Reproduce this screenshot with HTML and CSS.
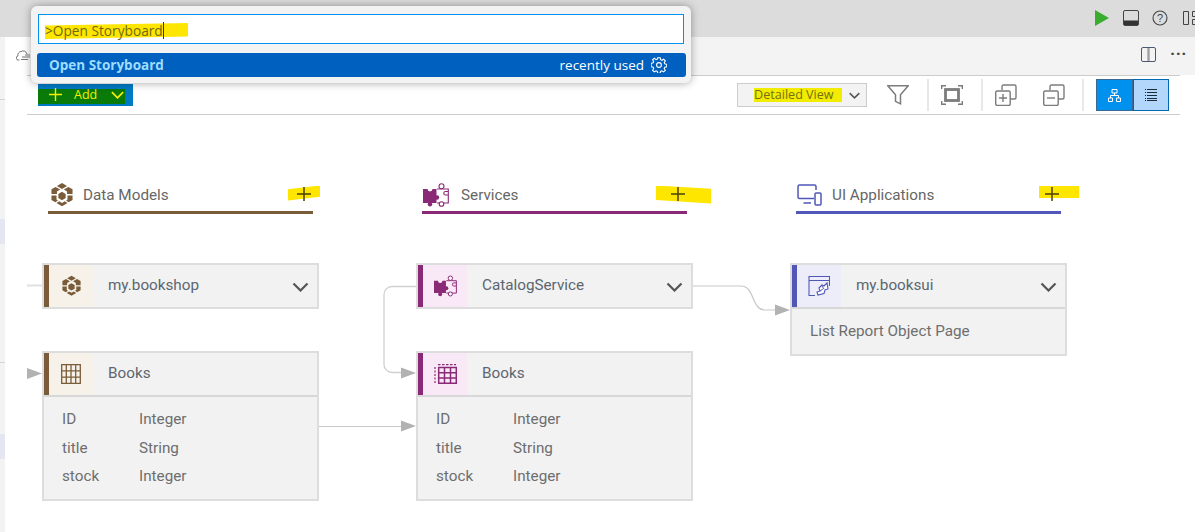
FILE: index.html
```html
<!DOCTYPE html>
<html lang="en">

<head>
    <meta charset="UTF-8">
    <meta name="viewport" content="width=device-width, initial-scale=1.0">
    <title>Storyboard</title>
    <link rel="stylesheet" href="styles.css">
</head>

<body>
    <svg class="icon-defs" width="0" height="0">
        <symbol id="plus" viewBox="0 0 14 14"><path d="M7 0v14M0 7h14" fill="none" stroke="currentColor" stroke-width="1.5"/></symbol>
        <symbol id="chevron" viewBox="0 0 16 10"><path d="M1 1.500l7 7 7-7" fill="none" stroke="currentColor" stroke-width="2.200"/></symbol>
        <symbol id="cube" viewBox="0 0 24 26">
            <path d="M12 0l5.500 3.200-5.500 3.200-5.500-3.200z" fill="currentColor"/>
            <path d="M.5 6.800L5 4.200l5 2.900-3.500 2V12H.5zM23.500 6.800L19 4.200l-5 2.900 3.500 2V12h6z" fill="currentColor"/>
            <path d="M12 9.500l4 2.300v4.600l-4 2.300-4-2.300v-4.600z" fill="currentColor"/>
            <path d="M.5 13.500h5.500V18l1.500 1-2.700 2-4.300-2.500zM23.500 13.500H18V18l-1.500 1 2.700 2 4.300-2.500z" fill="currentColor"/>
            <path d="M6 21.800l3-2 3 1.800 3-1.800 3 2-6 3.600z" fill="currentColor"/>
        </symbol>
        <symbol id="puzzle" viewBox="0 0 26 24">
            <path d="M0 6h4.500a2.500 2.500 0 0 0 5 0H13.500v14H0z" fill="currentColor"/>
            <circle cx="7" cy="21.300" r="2.200" fill="currentColor"/>
            <circle cx="14" cy="14.500" r="2.200" fill="currentColor"/>
            <path d="M14 6h11.300v14H14" fill="none" stroke="currentColor" stroke-width="1.100"/>
            <circle cx="18.500" cy="3.200" r="2.500" fill="#fff" stroke="currentColor" stroke-width="1.100"/>
            <circle cx="18.500" cy="21" r="2.300" fill="#fff" stroke="currentColor" stroke-width="1.100"/>
            <path d="M25 8.500h-2.500a1.700 1.700 0 0 0 0 3.500H25" fill="none" stroke="currentColor" stroke-width="1.100"/>
        </symbol>
        <symbol id="grid" viewBox="0 0 20 20">
            <path d="M.7.700h18.600v18.600H.7zM.7 6.900h18.600M.7 13.100h18.600M5.300.7v18.600M10 .7v18.600M14.700.7v18.600" fill="none" stroke="currentColor" stroke-width="1.300"/>
        </symbol>
    </svg>

    <header class="title-bar">
        <svg class="run-icon" width="14" height="16" viewBox="0 0 14 16"><path d="M0 0l14 8-14 8z"/></svg>
        <svg class="panel-icon" width="16" height="16" viewBox="0 0 16 16"><rect x=".5" y=".5" width="15" height="15" rx="1.500" fill="none" stroke="#444"/><path d="M1 10.500h14V15H1z" fill="#333"/></svg>
        <svg class="help-icon" width="16" height="16" viewBox="0 0 16 16"><circle cx="8" cy="8" r="7" fill="none" stroke="#444" stroke-width="1.100"/><text x="8" y="11.800" text-anchor="middle">?</text></svg>
        <svg class="layout-icon" width="16" height="14" viewBox="0 0 16 14"><path d="M.5.500h5v13h-5zM9.500.500h6v5h-6zM9.500 8.500h6v5h-6z" fill="none" stroke="#444"/></svg>
    </header>

    <div class="workspace">
        <aside class="side-strip">
            <div class="strip-line strip-line-a"></div>
            <div class="strip-mark strip-mark-a"></div>
            <div class="strip-line strip-line-b"></div>
            <div class="strip-mark strip-mark-b"></div>
        </aside>

        <main class="editor">
            <div class="tab-bar">
                <div class="tab">
                    <svg width="15" height="11" viewBox="0 0 15 11"><path d="M3.500 10H2.500a2 2 0 0 1-.5-4 3.500 3.500 0 0 1 3-4.500A4 4 0 0 1 11 4M6 7h8M5 9.500h7M9 5h5" fill="none" stroke="#777"/></svg>
                </div>
                <div class="tab-actions">
                    <svg width="15" height="15" viewBox="0 0 15 15"><rect x=".5" y=".5" width="14" height="14" rx="1.500" fill="none" stroke="#4a5a70"/><path d="M7 1v13" stroke="#d98a3a" stroke-width="1.200"/><path d="M8 1v13" stroke="#5a86c0"/></svg>
                    <span class="more-dots">&middot;&middot;&middot;</span>
                </div>
            </div>

            <div class="toolbar">
                <button class="add-button">
                    <span class="add-mark">
                        <svg class="add-plus" width="13" height="13"><use href="#plus"/></svg>
                        <span>Add</span>
                        <svg class="add-chevron" width="13" height="8"><use href="#chevron"/></svg>
                    </span>
                </button>

                <div class="view-select">
                    <span class="view-label">Detailed View</span>
                    <svg width="11" height="7"><use href="#chevron"/></svg>
                </div>

                <svg class="tool tool-filter" width="22" height="20" viewBox="0 0 22 20"><path d="M.8.800h20.400l-7.700 9v9l-5-2.500v-6.500z" fill="none" stroke="#7c7c7c" stroke-width="1.500"/></svg>
                <span class="tool-sep"></span>
                <svg class="tool" width="22" height="20" viewBox="0 0 22 20"><path d="M.7 4V.7H5M17 .7h4.300V4M21.300 16v3.300H17M5 19.300H.7V16" fill="none" stroke="#7c7c7c" stroke-width="1.400"/><rect x="4.500" y="4.500" width="13" height="11" fill="none" stroke="#7c7c7c" stroke-width="2.800"/></svg>
                <span class="tool-sep"></span>
                <svg class="tool" width="22" height="22" viewBox="0 0 22 22"><path d="M7 6V2.500A1.500 1.500 0 0 1 8.500 1h11A1.500 1.500 0 0 1 21 2.500v11a1.500 1.500 0 0 1-1.500 1.500H15" fill="none" stroke="#7c7c7c" stroke-width="1.400"/><rect x=".7" y="7" width="14.500" height="14.500" rx="1.500" fill="none" stroke="#7c7c7c" stroke-width="1.400"/><path d="M8 10v8M4 14h8" stroke="#7c7c7c" stroke-width="1.400"/></svg>
                <svg class="tool tool-collapse" width="22" height="22" viewBox="0 0 22 22"><path d="M7 6V2.500A1.500 1.500 0 0 1 8.500 1h11A1.500 1.500 0 0 1 21 2.500v11a1.500 1.500 0 0 1-1.500 1.500H15" fill="none" stroke="#7c7c7c" stroke-width="1.400"/><rect x=".7" y="7" width="14.500" height="14.500" rx="1.500" fill="none" stroke="#7c7c7c" stroke-width="1.400"/><path d="M4 14h8" stroke="#7c7c7c" stroke-width="1.400"/></svg>
                <span class="tool-sep"></span>

                <div class="view-toggle">
                    <div class="toggle-item toggle-on">
                        <svg width="13" height="13" viewBox="0 0 13 13"><path d="M4 .5h5v3.500H4zM.5 9h4v3.500h-4zM8.500 9h4v3.500h-4zM6.500 4v2.500M2.500 9V6.500h8V9" fill="none" stroke="#fff"/></svg>
                    </div>
                    <div class="toggle-item toggle-off">
                        <svg width="12" height="12" viewBox="0 0 12 12"><path d="M0 .5h1M2 .5h10M0 3.500h1M2 3.500h10M0 6.500h1M2 6.500h10M0 9.500h1M2 9.500h10M0 11.500h1M2 11.500h10" stroke="#1c2a3a"/></svg>
                    </div>
                </div>
            </div>

            <section class="canvas">
                <svg class="wires" width="1190" height="417">
                    <g transform="translate(-5 -115)">
                        <path d="M27 285.500h15" fill="none" stroke="#e0e0e0" stroke-width="2"/>
                        <path d="M416 286.500h-24a8 8 0 0 0-8 8v70a8 8 0 0 0 8 8h12" fill="none" stroke="#d0d0d0" stroke-width="1.300"/>
                        <path d="M319 426.500h84" fill="none" stroke="#c8c8c8" stroke-width="1.200"/>
                        <path d="M693 286h48c14 0 10 24 24 24h12" fill="none" stroke="#c8c8c8" stroke-width="1.200"/>
                        <path d="M27 368l15 5.500-15 5.500zM401 367.500l15 5.500-15 5.500zM401 420.500l15 5.500-15 5.500zM775 304.500l15 5.500-15 5.500z" fill="#b2b2b2"/>
                    </g>
                </svg>

                <div class="col-head col-models">
                    <svg class="col-icon" width="22" height="24"><use href="#cube"/></svg>
                    <span class="col-title">Data Models</span>
                    <span class="col-add"><svg width="14" height="14"><use href="#plus"/></svg></span>
                </div>
                <div class="col-head col-services">
                    <svg class="col-icon" width="26" height="24"><use href="#puzzle"/></svg>
                    <span class="col-title">Services</span>
                    <span class="col-add"><svg width="14" height="14"><use href="#plus"/></svg></span>
                </div>
                <div class="col-head col-apps">
                    <svg class="col-icon" width="25" height="22" viewBox="0 0 25 22"><path d="M17 14.500H2.500A1.500 1.500 0 0 1 1 13V2.500A1.500 1.500 0 0 1 2.500 1h15A1.500 1.500 0 0 1 19 2.500V6M6.500 19H14" fill="none" stroke="currentColor" stroke-width="1.500"/><rect x="18" y="9" width="6" height="12" rx="1" fill="none" stroke="currentColor" stroke-width="1.500"/></svg>
                    <span class="col-title">UI Applications</span>
                    <span class="col-add"><svg width="14" height="14"><use href="#plus"/></svg></span>
                </div>

                <article class="node node-models node-shop">
                    <div class="node-head">
                        <span class="node-icon"><svg width="19" height="22"><use href="#cube"/></svg></span>
                        <span class="node-title">my.bookshop</span>
                        <svg class="node-chevron" width="17" height="10"><use href="#chevron"/></svg>
                    </div>
                </article>

                <article class="node node-models node-books">
                    <div class="node-head">
                        <span class="node-icon"><svg width="20" height="20"><use href="#grid"/></svg></span>
                        <span class="node-title">Books</span>
                    </div>
                    <div class="node-body">
                        <div class="field"><span>ID</span><span>Integer</span></div>
                        <div class="field"><span>title</span><span>String</span></div>
                        <div class="field"><span>stock</span><span>Integer</span></div>
                    </div>
                </article>

                <article class="node node-services node-catalog">
                    <div class="node-head">
                        <span class="node-icon"><svg width="23" height="22"><use href="#puzzle"/></svg></span>
                        <span class="node-title">CatalogService</span>
                        <svg class="node-chevron" width="17" height="10"><use href="#chevron"/></svg>
                    </div>
                </article>

                <article class="node node-services node-proj">
                    <div class="node-head">
                        <span class="node-icon">
                            <svg width="23" height="20" viewBox="0 0 23 20"><path d="M1 3v16" fill="none" stroke="currentColor" stroke-width="1.200" stroke-dasharray="2 1.500"/><path d="M4 .7h18" fill="none" stroke="currentColor" stroke-width="1.200" stroke-dasharray="2.500 1.500"/><path d="M4.700 3.500h17.600v15.800H4.700zM4.700 8.700h17.600M4.700 14h17.600M10.500 3.500v15.800M16.500 3.500v15.800" fill="none" stroke="currentColor" stroke-width="1.500"/></svg>
                        </span>
                        <span class="node-title">Books</span>
                    </div>
                    <div class="node-body">
                        <div class="field"><span>ID</span><span>Integer</span></div>
                        <div class="field"><span>title</span><span>String</span></div>
                        <div class="field"><span>stock</span><span>Integer</span></div>
                    </div>
                </article>

                <article class="node node-apps node-ui">
                    <div class="node-head">
                        <span class="node-icon">
                            <svg width="22" height="22" viewBox="0 0 22 22"><path d="M1 21V1.500h20.500V11M1 5.500h20.500M1 20.500h6" fill="none" stroke="currentColor" stroke-width="1.100"/><path d="M11 13l3-3 2 1 3-3 1 6-3 1-1 3.500-6 1.500-1-3 3-1z" fill="#fff" stroke="currentColor" stroke-width="1.100"/><path d="M12 16l3-2M14 11l2 3" fill="none" stroke="currentColor"/></svg>
                        </span>
                        <span class="node-title">my.booksui</span>
                        <svg class="node-chevron" width="17" height="10"><use href="#chevron"/></svg>
                    </div>
                    <div class="node-body">
                        <div class="node-note">List Report Object Page</div>
                    </div>
                </article>
            </section>
        </main>
    </div>

    <!-- command palette sits over the tab bar -->
    <div class="palette">
        <div class="palette-input">
            <span class="palette-mark"></span>
            <span class="palette-query">&gt;Open Storyboard</span><span class="caret"></span>
        </div>
        <div class="palette-row">
            <span class="palette-name">Open Storyboard</span>
            <span class="palette-hint">recently used</span>
            <svg width="16" height="16" viewBox="0 0 16 16"><path d="M6.800.7h2.400l.4 2 1.300.6 1.800-1.100 1.600 1.700-1.100 1.700.6 1.300 2 .5v2.400l-2 .4-.6 1.300 1.100 1.800-1.700 1.600-1.700-1.100-1.300.6-.4 2H6.800l-.5-2-1.300-.6-1.700 1.100-1.700-1.600 1.100-1.800-.6-1.300-2-.4V6.400l2-.5.600-1.300-1.100-1.700 1.700-1.700L5 2.700l1.300-.6z" fill="none" stroke="#fff" stroke-width="1.100"/><circle cx="8" cy="8" r="2.400" fill="none" stroke="#fff" stroke-width="1.100"/></svg>
        </div>
    </div>
</body>

</html>
```

FILE: styles.css
```css
* {
    box-sizing: border-box;
}

html,
body {
    height: 100%;
}

body {
    margin: 0;
    display: flex;
    flex-direction: column;
    overflow: hidden;
    background-color: #fff;
    font-family: Roboto, sans-serif;
    color: #666;
}

.icon-defs {
    position: absolute;
}

svg {
    display: block;
    flex: none;
}

/* title bar */

.title-bar {
    height: 37px;
    flex: none;
    display: flex;
    align-items: center;
    justify-content: flex-end;
    margin-right: -4px;
    padding-bottom: 2px;
    background-color: #dcdcdc;
}

.run-icon {
    fill: #3aad2e;
}

.panel-icon {
    margin-left: 14px;
}

.help-icon {
    margin-left: 13px;
}

.help-icon text {
    font-family: "Liberation Sans", sans-serif;
    font-size: 11px;
    fill: #444;
}

.layout-icon {
    margin-left: 15px;
}

/* left strip */

.workspace {
    flex: 1;
    display: flex;
    min-height: 0;
}

.side-strip {
    width: 5px;
    flex: none;
    display: flex;
    flex-direction: column;
    background-color: #f3f3f3;
}

.strip-line {
    height: 1px;
    background-color: #d4d4d4;
}

.strip-line-a {
    margin-top: 62px;
}

.strip-mark {
    height: 25px;
    background-color: #e4e6f1;
}

.strip-mark-a {
    margin-top: 119px;
}

.strip-line-b {
    order: 1;
    margin-top: 118px;
}

.strip-mark-b {
    order: 2;
    margin-top: 71px;
}

/* editor */

.editor {
    flex: 1;
    min-width: 0;
    display: flex;
    flex-direction: column;
}

.tab-bar {
    height: 38px;
    flex: none;
    display: flex;
    align-items: center;
    justify-content: space-between;
    background-color: #f3f3f3;
}

.tab {
    width: 300px;
    height: 100%;
    padding: 13px 0 0 11px;
    background-color: #fff;
}

.tab-actions {
    display: flex;
    align-items: center;
    gap: 14px;
    padding: 0 11px 3px 0;
}

.more-dots {
    width: 14px;
    font-size: 17px;
    font-weight: 700;
    line-height: 15px;
    color: #444;
    letter-spacing: 0.5px;
}

.toolbar {
    height: 40px;
    flex: none;
    display: flex;
    align-items: center;
    margin: 0 15px 0 22px;
    padding: 0 11px;
    border-top: 1px solid #ccc;
    border-bottom: 1px solid #ccc;
}

.add-button {
    width: 95px;
    height: 22px;
    padding: 3px 0 0;
    border: none;
    background-color: #007ac4;
    font-family: "Open Sans", sans-serif;
    font-size: 12.500px;
    text-align: left;
}

.add-mark {
    width: 87px;
    height: 15px;
    display: flex;
    align-items: center;
    padding-bottom: 4px;
    background-color: #0a7a08;
    color: #f4f000;
}

.add-plus {
    margin: 0 12px 0 11px;
}

.add-chevron {
    margin-left: 14px;
}

.view-select {
    width: 130px;
    height: 24px;
    margin-left: auto;
    display: flex;
    align-items: center;
    padding-left: 16px;
    border: 1px solid #ccc;
    background-color: #f3f3f3;
    color: #555;
}

.view-label {
    width: 88px;
    margin-right: 7px;
    height: 14px;
    font-family: "Open Sans", sans-serif;
    font-size: 12.600px;
    line-height: 14px;
    white-space: nowrap;
    background-color: #f2ec00;
    color: #776f10;
}

.tool-filter {
    margin-left: 20px;
}

.tool-collapse {
    margin-left: 26px;
}

.tool-sep {
    width: 2px;
    height: 32px;
    margin: 0 12px 0 18px;
    background-color: #e8e8e8;
}

.tool-collapse + .tool-sep {
    margin-left: 17px;
}

.view-toggle {
    display: flex;
    height: 32px;
}

.toggle-item {
    width: 37px;
    display: flex;
    align-items: center;
    justify-content: center;
}

.toggle-on {
    background-color: #0090ee;
    border: 1px solid #3a6a94;
}

.toggle-off {
    width: 36px;
    background-color: #b3d7fa;
    border: 1px solid #0068b0;
}

/* diagram */

.canvas {
    position: relative;
    flex: 1;
    min-height: 0;
}

.wires {
    position: absolute;
    left: 0;
    top: 0;
}

.col-head {
    position: absolute;
    top: 67px;
    width: 265px;
    height: 32px;
    display: flex;
    align-items: center;
    padding-bottom: 3px;
    border-bottom: 3px solid currentColor;
}

.col-models {
    left: 43px;
    color: #7a5c3a;
}

.col-services {
    left: 417px;
    color: #8a2a76;
}

.col-apps {
    left: 791px;
    color: #5157b8;
}

.col-icon {
    margin: 0 10px 0 1px;
}

.col-models .col-icon {
    margin-left: 3px;
}

.col-services .col-icon {
    margin-right: 12px;
}

.col-title {
    font-size: 15.250px;
    color: #666;
}

.col-add {
    position: relative;
    width: 14px;
    height: 14px;
    margin: -3px 2px 0 auto;
    color: #4a4200;
}

.col-add svg {
    position: relative;
}

.col-add::before {
    content: "";
    position: absolute;
    top: -1px;
    height: 15px;
    background-color: #ffe600;
}

.col-models .col-add::before {
    left: -9px;
    width: 32px;
    clip-path: polygon(0 25%, 100% 0, 100% 75%, 0 100%);
}

.col-services .col-add::before {
    left: -15px;
    width: 55px;
    height: 18px;
    clip-path: polygon(0 0, 100% 18%, 100% 100%, 0 80%);
}

.col-apps .col-add::before {
    left: -6px;
    width: 40px;
    height: 12px;
}

.node {
    position: absolute;
    width: 277px;
    border: 2px solid #ddd;
    background-color: #f2f2f2;
}

.node-models {
    left: 37px;
    --accent: #7a5c3a;
    --tint: #f6f2ea;
}

.node-services {
    left: 411px;
    --accent: #8a2a76;
    --tint: #f9e8f6;
}

.node-apps {
    left: 785px;
    --accent: #5157b8;
    --tint: #ecedf9;
}

.node-shop,
.node-catalog,
.node-ui {
    top: 148px;
}

.node-books,
.node-proj {
    top: 236px;
}

.node-head {
    height: 42px;
    display: flex;
    align-items: center;
    border-left: 5px solid var(--accent);
}

.node-icon {
    width: 44px;
    height: 100%;
    display: flex;
    align-items: center;
    justify-content: center;
    background-color: var(--tint);
    color: var(--accent);
}

.node-title {
    margin: -2px 0 0 15px;
    font-size: 15.250px;
    color: #5c6670;
}

.node-chevron {
    margin: 2px 8px 0 auto;
    color: #555;
}

.node-body {
    padding: 8px 18px;
    border-top: 2px solid #d8d8d8;
    font-size: 15.250px;
    line-height: 28.500px;
    color: #6e6e6e;
}

.field {
    display: grid;
    grid-template-columns: 77px 1fr;
}

/* command palette */

.palette {
    position: absolute;
    left: 31px;
    top: 6px;
    width: 660px;
    height: 77px;
    padding: 8px 7px 0;
    border-radius: 6px;
    background-color: #f3f3f3;
    box-shadow: 0 0 8px rgba(0, 0, 0, 0.36);
    font-family: "Open Sans", sans-serif;
    font-size: 13.500px;
}

.palette-input {
    position: relative;
    height: 30px;
    display: flex;
    align-items: center;
    padding: 2px 0 0 6px;
    border: 1px solid #0090f1;
    background-color: #fff;
}

.palette-mark {
    position: absolute;
    left: 6px;
    top: 8px;
    width: 143px;
    height: 16px;
    background-color: #ffe600;
    clip-path: polygon(0 15%, 100% 0, 100% 85%, 0 100%);
}

.palette-query {
    position: relative;
    font-size: 13.700px;
    color: #6f6a10;
}

.caret {
    position: relative;
    width: 1px;
    height: 17px;
    background-color: #333;
}

.palette-row {
    height: 24px;
    margin: 9px -2px 0 -1px;
    display: flex;
    align-items: center;
    padding: 0 19px 0 12px;
    border-radius: 3px;
    background-color: #0060c0;
    color: #fff;
}

.palette-name {
    font-weight: 700;
    color: #9dddff;
}

.palette-hint {
    margin: 0 7px 0 auto;
}
```
